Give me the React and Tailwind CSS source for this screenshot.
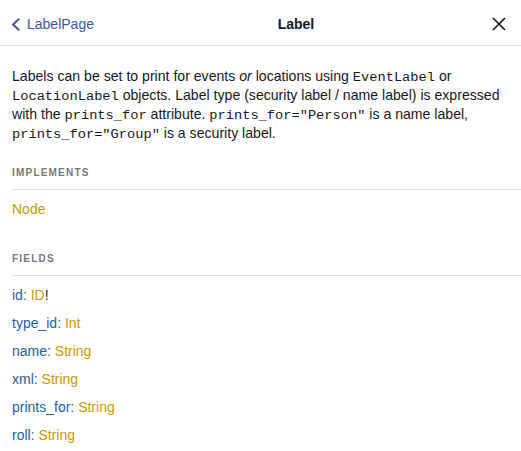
import React from 'react';

const fields = [
  { name: 'id', type: 'ID', bang: true },
  { name: 'type_id', type: 'Int' },
  { name: 'name', type: 'String' },
  { name: 'xml', type: 'String' },
  { name: 'prints_for', type: 'String' },
  { name: 'roll', type: 'String' },
];

const Code = ({ children }) => (
  <code className="font-['Liberation_Mono',monospace] text-[13.7px] leading-none">{children}</code>
);

const SectionTitle = ({ children }) => (
  <div className="border-b border-[#e0e0e0] pb-[8px] text-[10px] font-bold uppercase tracking-[1.2px] text-[#777] leading-[16px]">
    {children}
  </div>
);

export default function App() {
  return (
    <div className="w-[521px] h-[451px] bg-white overflow-hidden font-['Liberation_Sans',Arial,sans-serif] text-[#141823]">
      {/* Header */}
      <div className="flex items-center h-[46px] pt-[3px] border-b border-[#e0e0e0]">
        <button className="flex items-center pl-[11px] text-[14px] text-[#3B5998]">
          <svg width="10" height="13" viewBox="0 0 10 13" className="mr-[6px]">
            <path d="M8.3 0.8 L2 6.5 L8.3 12.2" fill="none" stroke="#3B5998" strokeWidth="2" />
          </svg>
          LabelPage
        </button>
        <div className="flex-1 pl-[14px] text-center text-[14px] font-bold text-[#141823]">Label</div>
        <button className="pr-[15px] pl-2">
          <svg width="14" height="14" viewBox="0 0 14 14">
            <path d="M1 1 L13 13 M13 1 L1 13" stroke="#141823" strokeWidth="1.7" fill="none" />
          </svg>
        </button>
      </div>

      <div className="pl-3">
        {/* Description */}
        <div className="pt-[21px] pr-3 text-[14.1px] leading-[19px]">
          Labels can be set to print for events <em>or</em> locations using <Code>EventLabel</Code> or{' '}
          <Code>LocationLabel</Code> objects. Label type (security label / name label) is expressed
          with the <Code>prints_for</Code> attribute. <Code>prints_for="Person"</Code> is a name label,{' '}
          <Code>prints_for="Group"</Code> is a security label.
        </div>

        {/* Implements */}
        <div className="mt-[22px]">
          <SectionTitle>Implements</SectionTitle>
          <div className="mt-[10px] text-[14px] leading-[18px] text-[#CA9800]">Node</div>
        </div>

        {/* Fields */}
        <div className="mt-[33px]">
          <SectionTitle>Fields</SectionTitle>
          <div className="mt-[10px] flex flex-col gap-[10px] text-[14px] leading-[18px]">
            {fields.map((f) => (
              <div key={f.name}>
                <span className="text-[#1F61A0]">{f.name}</span>
                <span className="text-[#1F61A0]">: </span>
                <span className="text-[#CA9800]">{f.type}</span>
                {f.bang && <span className="text-[#141823]">!</span>}
              </div>
            ))}
          </div>
        </div>
      </div>
    </div>
  );
}
